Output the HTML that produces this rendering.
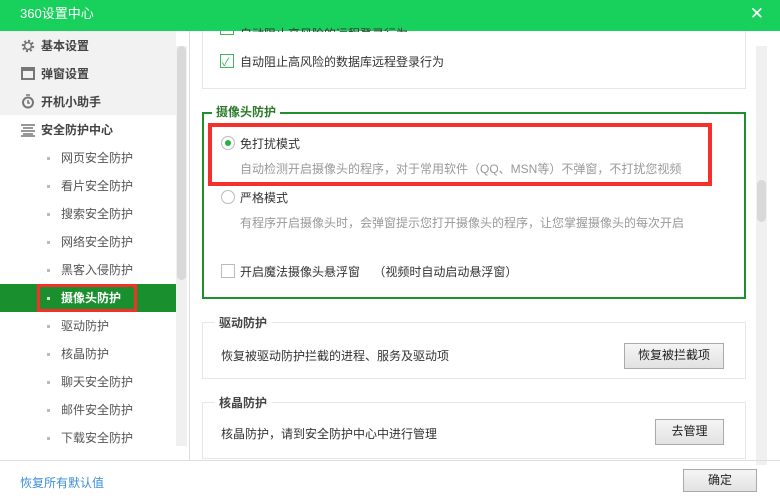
<!DOCTYPE html>
<html><head><meta charset="utf-8"><style>
*{margin:0;padding:0;box-sizing:border-box}
body{width:780px;height:500px;overflow:hidden;background:#fff;font-family:"Liberation Sans","Noto Sans CJK SC",sans-serif;font-size:12px;color:#333;position:relative}
.a{position:absolute}
.title{left:0;top:0;width:780px;height:31px;background:#18d15c;color:#fff;font-size:13px;line-height:27px;padding-left:20px}
.side{left:0;top:31px;width:176px;height:429px;background:#fff}
.it{position:absolute;left:0;width:176px;height:28px;line-height:28px;font-size:12px}
.top{padding-left:41px;font-weight:bold;color:#444}
.sub{padding-left:61px;color:#555}
.sub:before{content:"";position:absolute;left:47px;top:13px;width:3px;height:3px;background:#bbb}
.box{border:1px solid #e8e8e3}
.cb{width:14px;height:14px;border:1px solid #3cb55c;background:#fff}
.btn{border:1px solid #aaa;background:linear-gradient(#f5f5f5,#e2e2e2);text-align:center;line-height:23px;color:#222;font-size:12px}
.gray{color:#999}
</style></head><body>
<div class="a title">360设置中心</div>
<div class="a" style="right:16px;top:4px;color:#fff;font-size:17px">✕</div>
<div class="a side">
 <div class="a" style="left:0;top:0;width:176px;height:84px;background:#f2f2f2"></div>
 <div class="it top" style="top:1px">基本设置</div>
 <svg class="a" style="left:21px;top:8px" width="14" height="14" viewBox="0 0 14 14"><circle cx="7" cy="7" r="5" fill="none" stroke="#777" stroke-width="2.5" stroke-dasharray="2 1.9"/><circle cx="7" cy="7" r="3.5" fill="none" stroke="#777" stroke-width="1.6"/></svg>
 <div class="it top" style="top:29px">弹窗设置</div>
 <div class="a" style="left:21px;top:36px;width:14px;height:13px;border:2px solid #777;border-top-width:4px"></div>
 <div class="it top" style="top:57px">开机小助手</div>
 <svg class="a" style="left:21px;top:63px" width="14" height="15" viewBox="0 0 14 15"><circle cx="7" cy="8.5" r="5" fill="none" stroke="#777" stroke-width="2"/><path d="M5 1h4M7 6v3h2" stroke="#777" stroke-width="1.6" fill="none"/></svg>
 <div class="it top" style="top:85px">安全防护中心</div>
 <svg class="a" style="left:21px;top:93px" width="14" height="13" viewBox="0 0 14 13"><path d="M0 1h14M2 4h10M0 7h14M2 10h10M0 12h14" stroke="#777" stroke-width="1.6"/></svg>
 <div class="it sub" style="top:113px">网页安全防护</div>
 <div class="it sub" style="top:141px">看片安全防护</div>
 <div class="it sub" style="top:169px">搜索安全防护</div>
 <div class="it sub" style="top:197px">网络安全防护</div>
 <div class="it sub" style="top:225px">黑客入侵防护</div>
 <div class="it" style="top:253px;background:#1a8f2e;color:#fff;font-weight:bold;padding-left:61px">摄像头防护</div>
 <div class="a" style="left:47px;top:266px;width:3px;height:3px;background:#ddd"></div>
 <div class="a" style="left:37px;top:253px;width:100px;height:28px;border:3px solid #f5302a"></div>
 <div class="it sub" style="top:281px">驱动防护</div>
 <div class="it sub" style="top:309px">核晶防护</div>
 <div class="it sub" style="top:337px">聊天安全防护</div>
 <div class="it sub" style="top:365px">邮件安全防护</div>
 <div class="it sub" style="top:393px">下载安全防护</div>
</div>
<div class="a" style="left:176px;top:46px;width:11px;height:400px;background:#f0f0f0"></div>
<div class="a" style="left:177px;top:46px;width:9px;height:234px;background:#d9d9d9;border-radius:5px"></div>
<div class="a" style="left:189px;top:31px;width:1px;height:429px;background:#ddd"></div>
<div class="a" style="left:756px;top:46px;width:11px;height:419px;background:#f0f0f0"></div>
<div class="a" style="left:757px;top:180px;width:9px;height:42px;background:#d9d9d9;border-radius:5px"></div>

<div class="a box" style="left:202px;top:31px;width:544px;height:58px;border-top:none"></div>
<div class="a" style="left:220px;top:31px;width:14px;height:4px;overflow:hidden"><div class="cb" style="margin-top:-10px"></div></div>
<div class="a" style="left:240px;top:22px;line-height:14px;height:10px;overflow:hidden;padding-top:5px">自动阻止高风险的远程登录行为</div>
<div class="a cb" style="left:220px;top:54px"></div>
<div class="a" style="left:222px;top:54px;color:#3cb55c;font-size:11px">✓</div>
<div class="a" style="left:240px;top:53px">自动阻止高风险的数据库远程登录行为</div>

<div class="a" style="left:202px;top:112px;width:544px;height:187px;border:2px solid #1e8e2e"></div>
<div class="a" style="left:212px;top:103px;background:#fff;padding:0 4px;color:#2a7a2a;font-weight:bold">摄像头防护</div>
<div class="a" style="left:208px;top:123px;width:504px;height:63px;border:4px solid #f5302a"></div>
<div class="a" style="left:221px;top:136px;width:14px;height:14px;border:1px solid #bbb;border-radius:50%;background:#fff"></div>
<div class="a" style="left:225px;top:140px;width:6px;height:6px;border-radius:50%;background:#22b43c"></div>
<div class="a" style="left:240px;top:135px">免打扰模式</div>
<div class="a gray" style="left:240px;top:160px">自动检测开启摄像头的程序，对于常用软件（QQ、MSN等）不弹窗，不打扰您视频</div>
<div class="a" style="left:221px;top:190px;width:14px;height:14px;border:1px solid #bbb;border-radius:50%;background:#fff"></div>
<div class="a" style="left:240px;top:189px">严格模式</div>
<div class="a gray" style="left:240px;top:214px">有程序开启摄像头时，会弹窗提示您打开摄像头的程序，让您掌握摄像头的每次开启</div>
<div class="a" style="left:221px;top:264px;width:14px;height:14px;border:1px solid #bbb"></div>
<div class="a" style="left:240px;top:263px">开启魔法摄像头悬浮窗&nbsp;&nbsp;&nbsp;&nbsp;（视频时自动启动悬浮窗）</div>

<div class="a box" style="left:202px;top:322px;width:544px;height:57px"></div>
<div class="a" style="left:215px;top:314px;background:#fff;padding:0 4px;font-weight:bold;color:#444">驱动防护</div>
<div class="a" style="left:221px;top:347px">恢复被驱动防护拦截的进程、服务及驱动项</div>
<div class="a btn" style="left:624px;top:343px;width:100px;height:26px">恢复被拦截项</div>

<div class="a box" style="left:202px;top:402px;width:544px;height:57px"></div>
<div class="a" style="left:215px;top:394px;background:#fff;padding:0 4px;font-weight:bold;color:#444">核晶防护</div>
<div class="a" style="left:221px;top:425px">核晶防护，请到安全防护中心中进行管理</div>
<div class="a btn" style="left:655px;top:419px;width:69px;height:26px">去管理</div>

<div class="a" style="left:0;top:460px;width:780px;height:1px;background:#ddd"></div>
<div class="a" style="left:20px;top:474px;color:#3b8ed8">恢复所有默认值</div>
<div class="a btn" style="left:683px;top:469px;width:74px;height:23px;line-height:21px">确定</div>
</body></html>
